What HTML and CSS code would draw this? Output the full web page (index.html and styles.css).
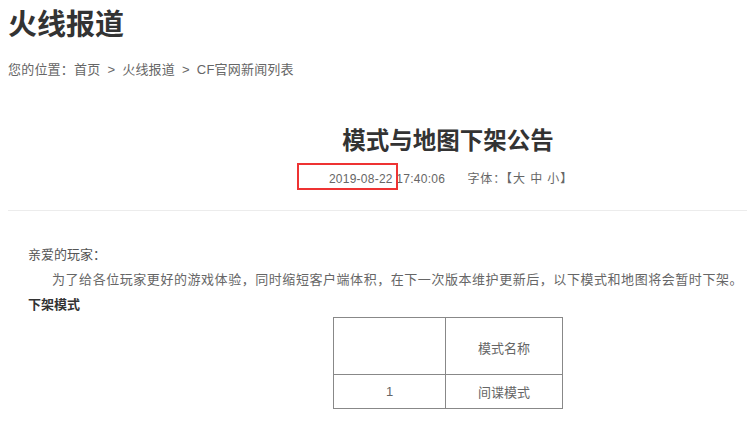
FILE: index.html
```html
<!DOCTYPE html>
<html lang="zh-CN">
<head>
  <meta charset="UTF-8">
  <title>模式与地图下架公告 - 火线报道</title>
  <link rel="stylesheet" href="styles.css">
</head>
<body>
  <div class="page">
    <h1 class="channel">火线报道</h1>
    <p class="crumbs">您的位置：首页<span class="sep">&gt;</span>火线报道<span class="sep">&gt;</span>CF官网新闻列表</p>

    <div class="article-head">
      <h2>模式与地图下架公告</h2>
      <div class="meta">
        <span class="time">2019-08-22 17:40:06</span>
        <span class="font-size">字体：【大 中 小】</span>
        <span class="mark"></span>
      </div>
    </div>

    <div class="article-body">
      <p class="greet">亲爱的玩家：</p>
      <p class="indent">为了给各位玩家更好的游戏体验，同时缩短客户端体积，在下一次版本维护更新后，以下模式和地图将会暂时下架。</p>
      <p class="sub">下架模式</p>
      <table class="modes">
        <tr class="head"><td></td><td>模式名称</td></tr>
        <tr><td>1</td><td>间谍模式</td></tr>
      </table>
    </div>
  </div>
</body>
</html>
```

FILE: styles.css
```css
body {
  margin: 8px;
  background: #fff;
  color: #333;
  font-family: "Liberation Sans", "Noto Sans CJK SC", sans-serif;
}
.page {
  width: 880px;
}
.channel {
  margin: 0;
  font-size: 29px;
  line-height: 34px;
  font-weight: 700;
  color: #333;
}
.crumbs {
  margin: 18px 0 0 0;
  font-size: 13px;
  line-height: 20px;
  color: #666;
  letter-spacing: 0.2px;
}
.crumbs .sep {
  margin: 0 7px;
}
.article-head {
  margin-top: 46px;
  text-align: center;
  border-bottom: 1px solid #ececec;
  padding-bottom: 21px;
}
.article-head h2 {
  margin: 0;
  font-size: 23.5px;
  line-height: 30px;
  font-weight: 700;
  color: #333;
}
.meta {
  position: relative;
  margin-top: 13px;
  padding-left: 6px;
  font-size: 12px;
  line-height: 20px;
  color: #666;
}
.meta .time {
  letter-spacing: 0.25px;
}
.meta .font-size {
  margin-left: 19px;
  letter-spacing: 0.9px;
}
.meta .mark {
  position: absolute;
  left: 289px;
  top: -6px;
  width: 97px;
  height: 23px;
  border: 2px solid #ee3333;
}
.article-body {
  padding: 31px 20px 0 20px;
  font-size: 13px;
  color: #666;
}
.article-body p {
  margin: 0;
  line-height: 25px;
}
.greet {
  color: #555;
  margin-bottom: 1px;
}
.indent {
  text-indent: 24px;
  letter-spacing: 0.55px;
}
.sub {
  font-weight: 700;
  color: #333;
  margin-bottom: -2px;
}
.modes {
  margin: 0 auto;
  border-collapse: collapse;
}
.modes td {
  border: 1px solid #888;
  text-align: center;
  color: #666;
  padding: 0;
}
.modes td:first-child { width: 111px; }
.modes td:last-child { width: 116px; }
.modes .head td {
  height: 53px;
  padding-top: 3px;
}
.modes tr:last-child td {
  height: 33px;
}
```
